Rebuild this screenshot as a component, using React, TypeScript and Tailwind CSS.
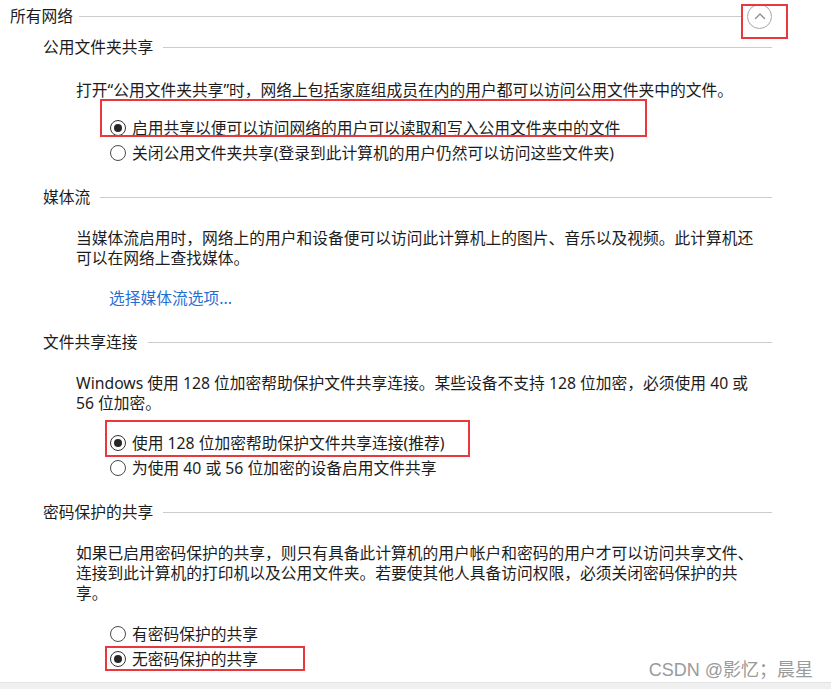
import React from "react";

function Radio({ checked }: { checked?: boolean }) {
  return (
    <span
      className={
        "w-[16px] h-[16px] rounded-full border flex items-center justify-center shrink-0 bg-white " +
        (checked ? "border-[#333333]" : "border-[#4a4a4a]")
      }
    >
      {checked ? <span className="w-[8px] h-[8px] rounded-full bg-[#262626]" /> : null}
    </span>
  );
}

function RadioRow({
  checked,
  label,
  mt,
  box,
}: {
  checked?: boolean;
  label: React.ReactNode;
  mt: string;
  box?: string;
}) {
  return (
    <div className={"relative flex items-center h-[25px] ml-[110px] self-start gap-[6px] whitespace-nowrap " + mt}>
      <Radio checked={checked} />
      <span>{label}</span>
      {box ? <div className={"absolute border-2 border-[#e8383d] pointer-events-none " + box} /> : null}
    </div>
  );
}

function SubHeading({ title, mt }: { title: string; mt: string }) {
  return (
    <div className={"flex items-center h-[20px] pl-[43px] pr-[59px] " + mt}>
      <span className="whitespace-nowrap">{title}</span>
      <div className="flex-1 h-px bg-[#cbcbcb] ml-[10px]" />
    </div>
  );
}

export default function App() {
  return (
    <div className="w-[831px] h-[689px] bg-white relative overflow-hidden flex flex-col text-[#1c1c1c] text-[15.75px] leading-[20px] font-['Noto_Sans','Noto_Sans_CJK_SC',sans-serif]">
      {/* 所有网络 */}
      <div className="flex items-center h-[26px] mt-[3px] pl-[10px] pr-[59px]">
        <span className="whitespace-nowrap">所有网络</span>
        <div className="flex-1 h-px bg-[#cbcbcb] ml-[6px]" />
        <div className="relative ml-[6px] w-[25px] h-[25px] rounded-full border border-[#a8a8a8] flex items-center justify-center shrink-0">
          <svg width="12" height="8" viewBox="0 0 12 8" fill="none">
            <path d="M1.5 6.5 L6 2 L10.5 6.5" stroke="#8c8c8c" strokeWidth="1.3" strokeLinecap="round" strokeLinejoin="round" />
          </svg>
          <div className="absolute left-[-7px] top-[-1px] w-[47px] h-[35px] border-2 border-[#e8383d]" />
        </div>
      </div>

      {/* 公用文件夹共享 */}
      <SubHeading title="公用文件夹共享" mt="mt-[8px]" />
      <p className="pl-[76px] mt-[23px] whitespace-nowrap">
        打开“公用文件夹共享”时，网络上包括家庭组成员在内的用户都可以访问公用文件夹中的文件。
      </p>
      <RadioRow
        checked
        mt="mt-[15px]"
        label="启用共享以便可以访问网络的用户可以读取和写入公用文件夹中的文件"
        box="left-[-10px] top-[-16px] w-[547px] h-[38px]"
      />
      <RadioRow mt="mt-0" label="关闭公用文件夹共享(登录到此计算机的用户仍然可以访问这些文件夹)" />

      {/* 媒体流 */}
      <SubHeading title="媒体流" mt="mt-[22px]" />
      <p className="pl-[76px] mt-[21px] whitespace-nowrap">
        当媒体流启用时，网络上的用户和设备便可以访问此计算机上的图片、音乐以及视频。此计算机还
        <br />
        可以在网络上查找媒体。
      </p>
      <div className="pl-[109px] mt-[20px]">
        <span className="text-[#1f6fd6] whitespace-nowrap">选择媒体流选项...</span>
      </div>

      {/* 文件共享连接 */}
      <SubHeading title="文件共享连接" mt="mt-[24px]" />
      <p className="pl-[76px] mt-[21px] whitespace-nowrap">
        Windows 使用 128 位加密帮助保护文件共享连接。某些设备不支持 128 位加密，必须使用 40 或
        <br />
        56 位加密。
      </p>
      <RadioRow
        checked
        mt="mt-[17px]"
        label="使用 128 位加密帮助保护文件共享连接(推荐)"
        box="left-[-5px] top-[-10px] w-[365px] h-[37px]"
      />
      <RadioRow mt="mt-0" label="为使用 40 或 56 位加密的设备启用文件共享" />

      {/* 密码保护的共享 */}
      <SubHeading title="密码保护的共享" mt="mt-[22px]" />
      <p className="pl-[76px] mt-[21px] whitespace-nowrap">
        如果已启用密码保护的共享，则只有具备此计算机的用户帐户和密码的用户才可以访问共享文件、
        <br />
        连接到此计算机的打印机以及公用文件夹。若要使其他人具备访问权限，必须关闭密码保护的共
        <br />
        享。
      </p>
      <RadioRow mt="mt-[18px]" label="有密码保护的共享" />
      <RadioRow
        checked
        mt="mt-0"
        label="无密码保护的共享"
        box="left-[-5px] top-0 w-[200px] h-[25px]"
      />

      {/* bottom bar */}
      <div className="mt-auto h-[7px] bg-[#f0f0f0] border-t border-[#e2e2e2]" />

      {/* watermark */}
      <div className="absolute right-[18px] top-[658px] text-[18px] leading-[24px] text-[#9a9a9a] whitespace-nowrap font-['Liberation_Sans','Noto_Sans_CJK_SC',sans-serif]">
        CSDN @影忆；晨星
      </div>
    </div>
  );
}
